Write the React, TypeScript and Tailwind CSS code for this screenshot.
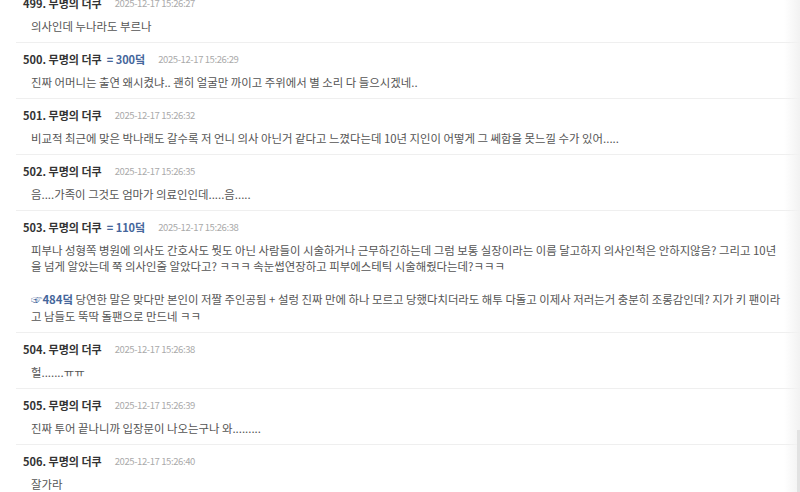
import React from "react";

type Row = {
  no: number;
  deok?: string;
  date: string;
  body: React.ReactNode;
};

const rows: Row[] = [
  { no: 499, date: "2025-12-17 15:26:27", body: "의사인데 누나라도 부르나" },
  {
    no: 500,
    deok: "= 300덬",
    date: "2025-12-17 15:26:29",
    body: "진짜 어머니는 출연 왜시켰냐.. 괜히 얼굴만 까이고 주위에서 별 소리 다 들으시겠네..",
  },
  {
    no: 501,
    date: "2025-12-17 15:26:32",
    body: "비교적 최근에 맞은 박나래도 갈수록 저 언니 의사 아닌거 같다고 느꼈다는데 10년 지인이 어떻게 그 쎄함을 못느낄 수가 있어.....",
  },
  { no: 502, date: "2025-12-17 15:26:35", body: "음....가족이 그것도 엄마가 의료인인데.....음....." },
  {
    no: 503,
    deok: "= 110덬",
    date: "2025-12-17 15:26:38",
    body: (
      <>
        <span className="block whitespace-nowrap">
          피부나 성형쪽 병원에 의사도 간호사도 뭣도 아닌 사람들이 시술하거나 근무하긴하는데 그럼 보통 실장이라는 이름 달고하지 의사인척은 안하지않음? 그리고 10년
        </span>
        <span className="block whitespace-nowrap">
          을 넘게 알았는데 쭉 의사인줄 알았다고? ㅋㅋㅋ 속눈썹연장하고 피부에스테틱 시술해줬다는데?ㅋㅋㅋ
        </span>
        <span className="block h-[16.5px]" />
        <span className="block whitespace-nowrap">
          <span className="font-bold text-[#45669b]">☞484덬</span> 당연한 말은 맞다만 본인이 저짤 주인공됨 + 설렁 진짜 만에 하나 모르고 당했다치더라도 해투 다돌고 이제사 저러는거 충분히 조롱감인데? 지가 키 팬이라
        </span>
        <span className="block whitespace-nowrap">고 남들도 뚝딱 돌팬으로 만드네 ㅋㅋ</span>
      </>
    ),
  },
  { no: 504, date: "2025-12-17 15:26:38", body: "헐.......ㅠㅠ" },
  { no: 505, date: "2025-12-17 15:26:39", body: "진짜 투어 끝나니까 입장문이 나오는구나 와........." },
  { no: 506, date: "2025-12-17 15:26:40", body: "잘가라" },
];

export default function App() {
  return (
    <div
      className="relative w-[800px] h-[492px] overflow-hidden bg-white"
      style={{ fontFamily: '"Noto Sans CJK KR", "Noto Sans", sans-serif' }}
    >
      <div className="-mt-[13px] pl-4">
        {rows.map((r) => (
          <div key={r.no} className="border-b border-[#efefef] pt-2 pb-2">
            <div className="flex items-center h-4 pl-[7px] whitespace-nowrap">
              <span className="text-[11px] font-bold text-[#333]">
                {r.no}. 무명의 더쿠
              </span>
              {r.deok && (
                <span className="ml-[5px] text-[11px] font-bold text-[#45669b]">
                  {r.deok}
                </span>
              )}
              <span className="ml-[13px] text-[9.5px] text-[#aaa] tracking-[-0.4px]">{r.date}</span>
            </div>
            <div className="mt-[6.5px] pl-[15px] text-[11.4px] leading-[16.5px] text-[#555]">
              {r.body}
            </div>
          </div>
        ))}
      </div>
      <div className="pointer-events-none absolute top-0 right-0 h-full w-[16px] bg-gradient-to-r from-transparent to-[#f2f2f2]" />
      <div className="pointer-events-none absolute right-0 top-[430px] h-[62px] w-[3px] bg-[#e2e2e2]" />
    </div>
  );
}
